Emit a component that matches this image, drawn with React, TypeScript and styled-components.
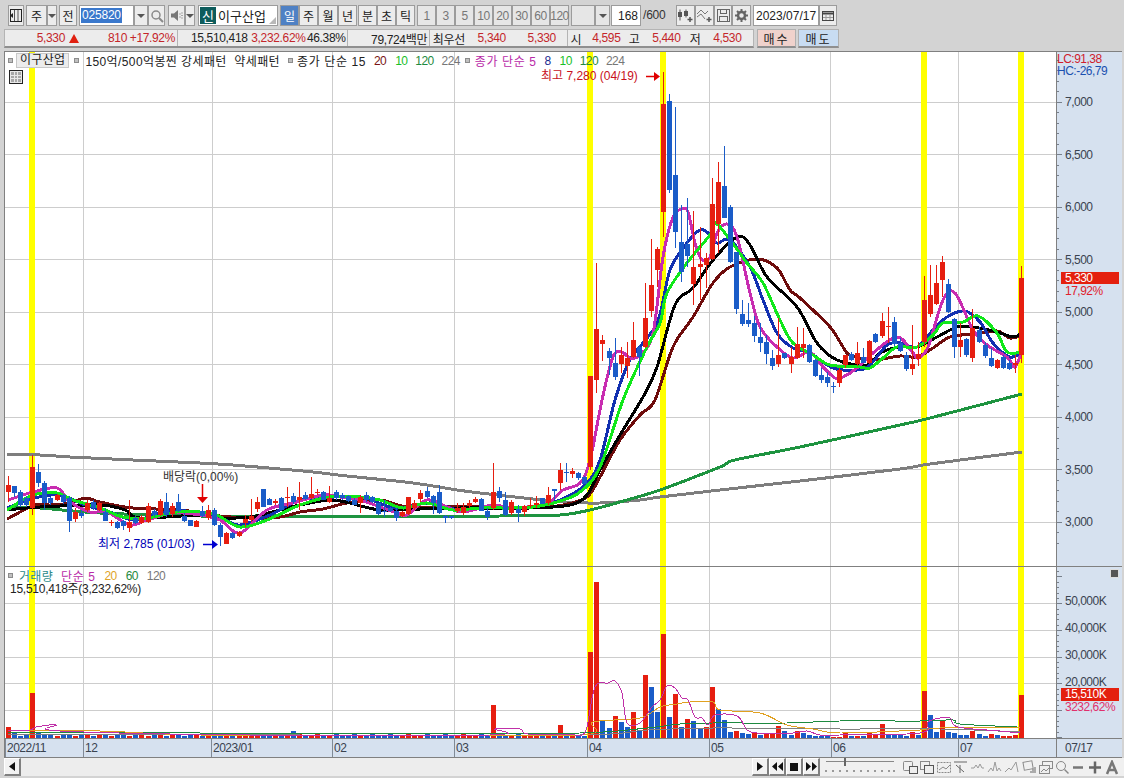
import React, { ReactElement, ReactNode } from 'react';
import styled, { createGlobalStyle } from 'styled-components';

type Candle = ['r' | 'b', number, number, number, number];

// body top, body bottom, high, low - all in page pixels
const candles: Candle[] = [
  ['r',485,492,476,502],['b',486,493,486,497],['b',492,505,490,507],['b',498,505,496,507],['r',467,508,455,515],
  ['b',472,483,464,487],['b',483,503,481,510],['b',498,503,497,505],['r',495,500,494,501],['b',495,502,494,504],
  ['b',498,521,496,532],['r',512,519,508,522],['b',513,516,510,518],['r',503,510,500,512],['b',502,508,500,510],
  ['r',503,510,502,511],['b',512,521,508,521],['r',522,523,520,526],['b',522,528,521,529],['b',521,526,520,530],
  ['r',522,528,500,532],['b',518,523,516,524],['r',517,523,515,524],['r',506,522,503,523],['b',511,515,509,517],
  ['r',501,515,499,516],['b',502,515,493,517],['r',506,514,503,517],['b',502,511,494,512],['b',516,521,513,522],
  ['b',520,526,520,526],['r',521,527,520,527],['b',511,516,506,517],['r',510,518,505,520],['b',510,525,508,526],
  ['b',525,537,523,546],['r',533,544,532,544],['b',533,538,532,539],['r',532,536,531,537],['r',519,523,515,527],
  ['r',516,520,499,522],['r',502,509,497,512],['b',489,507,489,507],['b',499,505,498,505],['r',501,503,499,505],
  ['b',498,510,497,510],['r',497,498,487,507],['b',496,502,493,504],['r',497,500,482,510],['b',495,499,492,500],
  ['r',494,498,477,499],['r',492,493,489,495],['b',492,500,491,500],['r',498,502,486,503],['b',492,498,490,500],
  ['b',495,498,493,500],['b',496,501,495,502],['b',500,505,498,505],['r',497,503,495,513],['b',495,500,492,502],
  ['b',497,502,496,503],['b',503,514,503,515],['b',511,512,500,517],['b',508,511,507,512],['b',511,518,508,521],
  ['r',512,516,511,517],['r',497,514,497,515],['r',503,508,500,510],['r',493,499,490,502],['b',491,497,487,498],
  ['b',496,503,495,514],['b',492,513,485,514],['b',516,518,515,523],['b',516,518,516,519],['r',508,511,503,513],
  ['r',507,513,503,515],['r',503,506,500,508],['r',499,502,497,503],['b',499,511,498,511],['b',511,517,508,520],
  ['r',492,508,463,510],['b',491,498,487,502],['b',500,515,492,516],['r',502,513,500,515],['b',509,513,505,522],
  ['r',506,512,505,516],['r',505,506,498,508],['r',503,505,496,508],['b',498,504,498,504],['r',495,503,487,505],
  ['b',489,491,489,500],['r',470,483,463,490],['b',472,473,463,482],['r',471,474,468,478],['b',473,478,472,480],
  ['b',477,484,476,484],['r',376,467,376,470],['r',329,380,263,393],['r',340,344,335,361],['b',351,358,348,375],
  ['b',363,377,338,380],['r',355,364,347,373],['r',358,366,342,378],['r',340,357,322,358],['b',347,357,345,376],
  ['r',318,347,283,348],['r',285,311,239,317],['r',249,270,247,287],['r',104,212,72,237],['b',101,190,94,193],
  ['b',175,232,107,248],['b',242,272,205,282],['b',244,256,198,267],['r',267,284,211,305],['r',264,267,227,300],
  ['r',258,265,253,288],['r',204,259,178,260],['r',182,224,162,253],['b',186,218,146,218],['b',207,262,205,263],
  ['b',252,309,252,314],['b',314,324,300,326],['b',320,324,303,327],['b',323,336,316,342],['b',337,343,323,352],
  ['b',342,354,335,364],['b',358,366,350,370],['r',355,364,318,367],['b',353,358,353,359],['r',357,364,347,373],
  ['r',344,358,327,359],['r',344,348,328,358],['b',345,362,344,363],['b',360,376,359,377],['b',375,380,368,383],
  ['b',377,383,372,387],['b',386,387,382,393],['r',370,383,368,387],['r',355,365,355,368],['b',354,360,352,361],
  ['r',353,364,342,366],['b',357,363,348,363],['r',341,363,340,364],['b',334,342,333,343],['r',321,336,313,338],
  ['r',326,327,307,343],['b',322,344,317,346],['b',343,351,338,352],['b',355,369,352,371],['r',364,369,325,375],
  ['r',354,359,342,366],['r',300,342,276,347],['r',295,314,265,317],['r',283,304,265,305],['r',262,280,256,297],
  ['b',284,312,279,313],['b',319,347,318,358],['r',340,347,323,357],['b',339,355,338,357],['r',328,358,309,362],
  ['b',330,342,327,343],['b',345,356,342,358],['b',358,366,348,367],['r',360,368,359,369],['b',357,368,355,369],
  ['b',363,369,360,370],['r',363,365,355,373],['r',278,355,266,363],
];

// volume bar tops for the first 96 days that stand out, the rest sit about 2px over the base
const volLeft: Record<number, number> = { 0: 727, 1: 732, 4: 693, 5: 733, 46: 733, 47: 731, 48: 733, 80: 705, 91: 725, 92: 733 };
// from day 96: positive = red, negative = blue
const volRight = [
  652,582,-720,-728,716,-722,-727,712,-731,675,-687,-712,634,-717,694,-727,719,-721,-729,727,687,-709,-720,-732,731,
  -733,-734,733,-735,734,733,726,-731,-735,731,-733,-735,-736,-736,-735,737,737,732,-736,736,-736,733,734,724,-734,
  -735,-735,-736,732,-735,691,-715,-732,721,-732,-733,-735,-735,731,-734,-736,734,-735,736,736,735,695,
];

const candleX = (i: number): number => 8 + i * 6.066;
const priceY = (p: number): number => 102 + (7000 - p) * 0.105;
const prices = [7000, 6500, 6000, 5500, 5000, 4500, 4000, 3500, 3000];
const gridX = [83, 212, 332, 454, 587, 709, 830, 958];
const yellowX = [29, 587, 660, 921, 1018];

type Pt = [number, number];

// catmull-rom through the points, good enough for moving averages
const smooth = (pts: Pt[]): string => {
  let d = `M${pts[0][0]} ${pts[0][1]}`;
  for (let i = 0; i < pts.length - 1; i++) {
    const p0 = pts[i - 1] || pts[i];
    const p1 = pts[i];
    const p2 = pts[i + 1];
    const p3 = pts[i + 2] || p2;
    d += `C${(p1[0] + (p2[0] - p0[0]) / 6).toFixed(1)} ${(p1[1] + (p2[1] - p0[1]) / 6).toFixed(1)} ${(p2[0] - (p3[0] - p1[0]) / 6).toFixed(1)} ${(p2[1] - (p3[1] - p1[1]) / 6).toFixed(1)} ${p2[0]} ${p2[1]}`;
  }
  return d;
};

const gray224: Pt[] = [[7,455],[40,455],[70,457],[133,460],[200,463],[233,465],[280,469],[313,472],[347,476],[413,483],[457,490],[497,495],[533,499],[563,502],[600,503],[640,500],[660,497],[720,490],[800,481],[900,469],[930,464],[1022,452]];
const green120: Pt[] = [[7,507],[40,508],[100,513],[200,516],[280,516],[400,517],[500,516],[560,515],[590,510],[620,502],[660,490],[720,467],[735,460],[800,447],[900,425],[930,418],[1022,394]];
const maroon: Pt[] = [[7,519],[35,505],[50,505],[70,503],[85,498],[100,502],[133,508],[180,510],[220,516],[250,518],[280,517],[300,512],[323,509],[347,503],[380,500],[407,507],[447,507],[480,507],[530,508],[563,505],[587,497],[600,477],[620,440],[640,415],[655,400],[673,347],[693,317],[713,283],[730,267],[757,259],[777,268],[790,290],[800,298],[830,327],[843,347],[850,355],[873,360],[900,356],[917,357],[933,348],[950,337],[973,334],[997,331],[1010,338],[1022,335]];
const black: Pt[] = [[7,510],[40,507],[100,505],[125,510],[140,518],[200,515],[220,518],[250,517],[280,510],[300,505],[330,500],[350,503],[380,510],[420,509],[460,508],[530,508],[570,505],[587,495],[600,470],[620,435],[643,397],[657,367],[675,305],[693,288],[713,260],[737,237],[750,245],[767,277],[797,307],[817,343],[837,360],[867,365],[880,353],[900,347],[917,347],[937,337],[957,327],[973,327],[997,332],[1013,337],[1022,333]];
const navy: Pt[] = [[7,508],[35,498],[60,495],[85,505],[110,512],[135,520],[165,512],[200,512],[225,520],[240,525],[270,515],[300,500],[335,497],[365,498],[395,508],[430,503],[460,510],[490,507],[530,507],[560,500],[585,485],[600,460],[615,400],[630,360],[657,323],[670,270],[687,243],[700,230],[708,233],[717,243],[730,240],[750,267],[763,300],[777,333],[793,348],[810,353],[833,368],[857,370],[870,365],[887,345],[900,343],[917,347],[933,330],[947,317],[965,311],[980,322],[993,343],[1010,357],[1022,352]];
const magenta: Pt[] = [[8,500],[33,492],[57,488],[70,502],[90,512],[107,512],[130,525],[147,520],[173,513],[200,515],[220,520],[240,533],[267,510],[293,503],[323,495],[340,497],[360,500],[397,513],[407,515],[427,500],[447,507],[463,512],[493,505],[513,508],[547,503],[563,490],[580,483],[590,460],[602,400],[613,357],[622,352],[630,358],[640,355],[653,333],[663,257],[673,217],[682,209],[688,212],[695,243],[702,260],[710,257],[717,233],[727,224],[737,237],[750,293],[760,327],[777,347],[793,358],[810,352],[823,367],[835,378],[843,377],[857,368],[873,353],[897,337],[913,353],[918,358],[928,347],[943,300],[955,293],[973,330],[987,345],[1007,357],[1015,367],[1022,350]];
const lime: Pt[] = [[7,510],[33,495],[57,493],[73,500],[100,508],[123,517],[147,518],[177,512],[200,512],[217,515],[240,527],[267,520],[300,505],[330,497],[360,497],[380,500],[403,508],[427,503],[453,510],[480,508],[513,508],[533,507],[557,502],[580,492],[600,467],[623,400],[647,347],[660,323],[667,293],[687,263],[710,235],[717,224],[747,263],[763,283],[780,320],[793,343],[813,355],[830,365],[860,367],[870,368],[883,358],[897,347],[917,347],[933,335],[943,323],[963,322],[978,316],[997,333],[1007,352],[1022,352]];

const volMagenta: Pt[] = [[8,731],[30,730],[36,727],[56,725],[60,731],[250,735],[490,735],[495,729],[520,729],[528,734],[575,735],[582,735],[587,727],[595,687],[608,683],[615,681],[622,693],[627,723],[640,723],[652,707],[660,700],[667,686],[675,688],[682,698],[688,700],[695,717],[702,718],[708,725],[715,715],[737,716],[747,730],[757,733],[780,733],[793,733],[807,731],[820,735],[840,735],[920,733],[928,722],[940,718],[950,718],[958,727],[1000,731],[1020,733]];
const volOrange: Pt[] = [[8,730],[100,731],[200,735],[400,735],[582,735],[593,722],[640,718],[660,707],[677,704],[690,702],[713,702],[720,710],[760,713],[787,725],[813,729],[840,733],[920,730],[940,728],[1020,728]];
const volGreen: Pt[] = [[8,733],[200,733],[400,734],[580,733],[647,728],[680,724],[713,723],[787,723],[840,721],[920,721],[953,720],[960,724],[1017,727]];
const volGray: Pt[] = [[8,734],[300,735],[580,735],[647,730],[713,728],[840,729],[940,729],[1020,732]];

const GlobalStyle = createGlobalStyle`
  html, body { margin: 0; padding: 0; background: #d3d3d3; }
  body { font-family: "Liberation Sans", "Noto Sans CJK KR", sans-serif; font-size: 12px; color: #222; }
`;

const Page = styled.div`
  width: 1124px;
  height: 778px;
  overflow: hidden;
  display: flex;
  flex-direction: column;
  background: #d3d3d3;
`;

const Toolbar = styled.div`
  display: flex;
  align-items: stretch;
  height: 21px;
  margin-top: 5px;
  padding-left: 8px;
`;

const Group = styled.div<{ $ml?: number }>`
  display: flex;
  margin-left: ${(p) => p.$ml ?? 0}px;
`;

const Btn = styled.div<{ $w: number; $on?: boolean; $dim?: boolean }>`
  box-sizing: border-box;
  width: ${(p) => p.$w}px;
  display: flex;
  align-items: center;
  justify-content: center;
  border: 1px solid #9c9c9c;
  background: ${(p) => (p.$on ? '#4f81c4' : p.$dim ? '#e6e6e6' : '#ececec')};
  color: ${(p) => (p.$on ? '#fff' : p.$dim ? '#777' : '#222')};
  font-size: 12px;
  letter-spacing: ${(p) => (p.$dim ? '-0.5px' : '0')};
`;

const Field = styled.div<{ $w: number; $end?: boolean; $small?: boolean }>`
  box-sizing: border-box;
  width: ${(p) => p.$w}px;
  display: flex;
  align-items: center;
  justify-content: ${(p) => (p.$end ? 'flex-end' : 'flex-start')};
  border: 1px solid #9c9c9c;
  background: #fff;
  padding: 0 ${(p) => (p.$small ? 2 : 1)}px;
  font-size: ${(p) => (p.$small ? 12 : 13)}px;
  white-space: nowrap;
`;

const CodeSel = styled.span`
  background: #3a78cc;
  color: #fff;
  padding: 0 1px;
  font-size: 12px;
  letter-spacing: -0.2px;
  line-height: 15px;
`;

const NameBadge = styled.span`
  display: flex;
  align-items: center;
  justify-content: center;
  width: 16px;
  height: 17px;
  background: #0e5c5c;
  color: #fff;
  margin-right: 2px;
`;

const Corner = styled.span`
  width: 0;
  height: 0;
  margin-left: auto;
  margin-top: 9px;
  border-left: 7px solid transparent;
  border-bottom: 7px solid #b8b8b8;
`;

const Caret = styled.span`
  width: 0;
  height: 0;
  border-left: 4px solid transparent;
  border-right: 4px solid transparent;
  border-top: 4px solid #555;
`;

const Total = styled.span`
  width: 26px;
  margin-left: 2px;
  line-height: 21px;
  color: #333;
  letter-spacing: -0.2px;
`;

const QuoteRow = styled.div`
  display: flex;
  margin: 3px 0 0 4px;
  height: 19px;
`;

const QuoteBox = styled.div`
  display: flex;
  box-sizing: border-box;
  width: 750px;
  border: 1px solid #b4b4b4;
  border-bottom: 2px solid #8f8f8f;
  background: #ececec;
`;

const QuoteCell = styled.div<{ $w: number; $last?: boolean }>`
  box-sizing: border-box;
  width: ${(p) => p.$w}px;
  display: flex;
  align-items: center;
  border-right: ${(p) => (p.$last ? 'none' : '1px solid #b4b4b4')};
`;

const QuoteText = styled.span<{ $w: number; $red?: boolean; $left?: number }>`
  width: ${(p) => p.$w}px;
  flex: none;
  box-sizing: border-box;
  text-align: ${(p) => (p.$left !== undefined ? 'left' : 'right')};
  padding-left: ${(p) => p.$left ?? 0}px;
  color: ${(p) => (p.$red ? '#c4262a' : '#222')};
  letter-spacing: -0.35px;
  white-space: nowrap;
`;

const UpMark = styled.span`
  width: 0;
  height: 0;
  margin-left: 4px;
  border-left: 5px solid transparent;
  border-right: 5px solid transparent;
  border-bottom: 9px solid #e02010;
`;

const TradeBtn = styled.div<{ $sell?: boolean; $ml: number }>`
  box-sizing: border-box;
  width: ${(p) => (p.$sell ? 41 : 39)}px;
  margin-left: ${(p) => p.$ml}px;
  display: flex;
  align-items: center;
  justify-content: center;
  letter-spacing: 2px;
  border: 1px solid #b0b0b0;
  border-bottom: 2px solid #8f8f8f;
  background: ${(p) => (p.$sell ? '#c8dcf2' : '#f0d2cc')};
`;

const Frame = styled.div`
  box-sizing: border-box;
  width: 1118px;
  margin: 3px 0 0 4px;
  border-top: 1px solid #808080;
  border-left: 1px solid #808080;
  display: flex;
  flex-direction: column;
`;

const ChartRow = styled.div<{ $h: number }>`
  display: flex;
  height: ${(p) => p.$h}px;
  flex: none;
  box-sizing: content-box;
  border-bottom: 1px solid #808080;
`;

const Plot = styled.div`
  position: relative;
  width: 1051px;
  background: #fff;
`;

const AxisCol = styled.div`
  width: 65px;
  flex: none;
  border-left: 1px solid #808080;
  background: #d6e1ef;
`;

const DateStrip = styled.div`
  display: flex;
  height: 18px;
  flex: none;
  background: #d6e1ef;
  border-bottom: 1px solid #808080;
`;

const DateMain = styled.div`
  width: 1051px;
`;

const Drawing = styled.svg`
  display: block;
`;

const MaLine = styled.path<{ $c: string; $thin?: boolean }>`
  fill: none;
  stroke: ${(p) => p.$c};
  stroke-width: ${(p) => (p.$thin ? 1 : 3)}px;
  shape-rendering: crispEdges;
`;

const AxisText = styled.text<{ $fill?: string }>`
  font-size: 12px;
  fill: ${(p) => p.$fill ?? '#3a4350'};
  letter-spacing: -0.5px;
`;

const NoteText = styled.text<{ $fill: string }>`
  font-size: 12px;
  fill: ${(p) => p.$fill};
`;

const Legend = styled.div`
  position: absolute;
  left: 3px;
  top: 1px;
  display: flex;
  align-items: center;
  height: 15px;
  white-space: nowrap;
`;

const Bullet = styled.span<{ $ml?: number }>`
  width: 3px;
  height: 3px;
  flex: none;
  margin-left: ${(p) => p.$ml ?? 0}px;
  background: #c0c0c0;
  border: 1px solid #8c8c8c;
`;

const NameTag = styled.span`
  margin: 0 5px 0 3px;
  padding: 0 3px;
  background: #ececec;
  border: 1px solid #c8c8c8;
  line-height: 13px;
  letter-spacing: 0.3px;
`;

const LegendText = styled.span<{ $c?: string; $ml?: number; $ls?: number }>`
  color: ${(p) => p.$c ?? '#222'};
  margin-left: ${(p) => p.$ml ?? 0}px;
  letter-spacing: ${(p) => p.$ls ?? -0.6}px;
`;

const GridIcon = styled.div`
  position: absolute;
  left: 4px;
  top: 18px;
  width: 14px;
  height: 14px;
  box-sizing: border-box;
  border: 1px solid #222;
  background: #e8e8e8;
  display: grid;
  grid-template-columns: repeat(3, 1fr);
  padding: 1px;
  gap: 1px;
`;

const GridCell = styled.span`
  background: #a8a8a8;
`;

const VolLegend = styled.div`
  position: absolute;
  left: 3px;
  top: 1px;
`;

const VolLine = styled.div`
  display: flex;
  align-items: center;
  height: 15px;
  white-space: nowrap;
`;

const VolCount = styled.div`
  margin-left: 2px;
  line-height: 12px;
  letter-spacing: -0.25px;
  color: #222;
`;

const CloseBox = styled.div`
  position: absolute;
  right: -63px;
  top: 2px;
  width: 7px;
  height: 7px;
  background: #555;
  border: 1px solid #ddd;
`;

const BottomBar = styled.div`
  display: flex;
  align-items: stretch;
  height: 18px;
  margin-left: 4px;
  background: #f0f0f0;
`;

const Track = styled.div`
  width: 731px;
  background-color: #ededed;
  background-image: radial-gradient(#fafafa 0.5px, transparent 0.6px);
  background-size: 2px 2px;
`;

const NavBtn = styled.div`
  box-sizing: border-box;
  width: 17px;
  display: flex;
  align-items: center;
  justify-content: center;
  background: #f2f2f2;
  border: 1px solid #fff;
  border-right: 2px solid #808080;
  border-bottom: 2px solid #808080;
`;

const Slider = styled.svg`
  margin-left: 4px;
`;

const IconRow = styled.div`
  display: flex;
  align-items: center;
  margin-left: 4px;
`;

const TinyIcon = ({ w = 17, h = 15, children }: { w?: number; h?: number; children: ReactNode }): ReactElement => (
  <svg width={w} height={h} viewBox={`0 0 ${w} ${h}`} fill="none" stroke="#8a8a8a" strokeWidth="1">{children}</svg>
);

const Price = (): ReactElement => (
  <Drawing width={1051} height={514} viewBox="5 52 1051 514">
    {prices.map((p) => <line key={p} x1={5} x2={1056} y1={priceY(p)} y2={priceY(p)} stroke="#cdcdcd" shapeRendering="crispEdges" />)}
    {gridX.map((x) => <line key={x} x1={x} x2={x} y1={52} y2={566} stroke="#cdcdcd" shapeRendering="crispEdges" />)}
    {yellowX.map((x) => <rect key={x} x={x} y={52} width={6} height={514} fill="#ffff00" />)}
    <MaLine d={smooth(gray224)} $c="#7e7e7e" />
    <MaLine d={smooth(green120)} $c="#1e9440" />
    <MaLine d={smooth(maroon)} $c="#6e0c0c" />
    <MaLine d={smooth(black)} $c="#000" />
    <MaLine d={smooth(navy)} $c="#1230b0" />
    <MaLine d={smooth(magenta)} $c="#c82cb0" />
    <MaLine d={smooth(lime)} $c="#10e81a" />
    {candles.map(([c, top, bot, hi, lo], i) => {
      const x = Math.round(candleX(i));
      const fill = c === 'r' ? '#e61e10' : '#1a5cc8';
      return (
        <g key={i} shapeRendering="crispEdges" fill={fill}>
          <rect x={x} y={hi} width={1} height={lo - hi} />
          <rect x={x - 2} y={top} width={5} height={Math.max(bot - top, 1)} />
        </g>
      );
    })}
    <NoteText $fill="#c8101c" x={541} y={80}>최고 7,280 (04/19)</NoteText>
    <path d="M646 76.500H655" stroke="#e00000" strokeWidth={1.5} />
    <path d="M654 72l6 4.500-6 4.500z" fill="#e00000" />
    <NoteText $fill="#333" x={163} y={481}>배당락(0,00%)</NoteText>
    <path d="M202.500 484V498" stroke="#e00000" strokeWidth={1.5} />
    <path d="M197 497h11l-5.500 6z" fill="#e00000" />
    <NoteText $fill="#0000b8" x={98} y={548}>최저 2,785 (01/03)</NoteText>
    <path d="M203 544.500H213" stroke="#0000d0" strokeWidth={1.5} />
    <path d="M212 540l6 4.500-6 4.500z" fill="#0000d0" />
  </Drawing>
);

const PriceAxis = (): ReactElement => {
  const ticks: number[] = [];
  for (let p = 2800; p <= 7400; p += 100) ticks.push(p);
  return (
    <Drawing width={65} height={514} viewBox="1057 52 65 514">
      {ticks.map((p) => (
        <line key={p} x1={1057} x2={p % 500 === 0 ? 1062 : 1059} y1={priceY(p)} y2={priceY(p)} stroke="#77808c" shapeRendering="crispEdges" />
      ))}
      {prices.map((p) => (
        <AxisText key={p} x={1065} y={priceY(p) + 4}>{p.toLocaleString('en-US')}</AxisText>
      ))}
      <AxisText $fill="#d01c2c" x={1057} y={63}>LC:91,38</AxisText>
      <AxisText $fill="#1a50b0" x={1057} y={75}>HC:-26,79</AxisText>
      <rect x={1061} y={272} width={58} height={12} fill="#e4200e" />
      <AxisText $fill="#fff" x={1065} y={282}>5,330</AxisText>
      <AxisText $fill="#e0202c" x={1065} y={295}>17,92%</AxisText>
    </Drawing>
  );
};

const Volume = (): ReactElement => (
  <Drawing width={1051} height={171} viewBox="5 567 1051 171">
    {[603, 630, 657, 683, 710].map((y) => <line key={y} x1={5} x2={1056} y1={y} y2={y} stroke="#cdcdcd" shapeRendering="crispEdges" />)}
    {gridX.map((x) => <line key={x} x1={x} x2={x} y1={567} y2={738} stroke="#cdcdcd" shapeRendering="crispEdges" />)}
    {yellowX.map((x) => <rect key={x} x={x} y={567} width={6} height={171} fill="#ffff00" />)}
    {candles.map(([c], i) => {
      const x = Math.round(candleX(i));
      const raw = i >= 96 ? volRight[i - 96] : volLeft[i] ?? (734 + (i % 3));
      const top = Math.abs(raw);
      const red = i >= 96 ? raw > 0 : c === 'r';
      return <rect key={i} x={x - 2} y={top} width={5} height={738 - top} fill={red ? '#e61e10' : '#1a5cc8'} shapeRendering="crispEdges" />;
    })}
    <MaLine d={smooth(volGray)} $c="#808080" $thin />
    <MaLine d={smooth(volGreen)} $c="#1e8a40" $thin />
    <MaLine d={smooth(volOrange)} $c="#e0a020" $thin />
    <MaLine d={smooth(volMagenta)} $c="#c030a8" $thin />
  </Drawing>
);

const VolumeAxis = (): ReactElement => {
  const ticks: number[] = [];
  for (let y = 737; y > 570; y -= 5.35) ticks.push(Math.round(y));
  return (
    <Drawing width={65} height={171} viewBox="1057 567 65 171">
      {ticks.map((y, i) => (
        <line key={y} x1={1057} x2={i % 5 === 0 ? 1062 : 1059} y1={y} y2={y} stroke="#77808c" shapeRendering="crispEdges" />
      ))}
      {[['50,000K', 605], ['40,000K', 632], ['30,000K', 659], ['20,000K', 686]].map(([t, y]) => (
        <AxisText key={t} x={1065} y={y}>{t}</AxisText>
      ))}
      <rect x={1061} y={688} width={58} height={13} fill="#e4200e" />
      <AxisText $fill="#fff" x={1065} y={698}>15,510K</AxisText>
      <AxisText $fill="#e0306c" x={1065} y={711}>3232,62%</AxisText>
    </Drawing>
  );
};

const dateLabels: [string, number][] = [['2022/11', 7], ['12', 85], ['2023/01', 213], ['02', 334], ['03', 456], ['04', 589], ['05', 711], ['06', 833], ['07', 960]];

const Dates = (): ReactElement => (
  <Drawing width={1051} height={18} viewBox="5 739 1051 18">
    {dateLabels.map(([t, x]) => (
      <g key={t}>
        <line x1={x - 2} x2={x - 2} y1={739} y2={757} stroke="#808a96" shapeRendering="crispEdges" />
        <AxisText x={x} y={752}>{t}</AxisText>
      </g>
    ))}
  </Drawing>
);

const codeIcons = {
  panel: (
    <TinyIcon w={14} h={15}>
      <rect x="1.500" y="1.500" width="11" height="12" stroke="#222" />
      <path d="M5.500 2v11M9 2v11" stroke="#555" />
      <path d="M1 7.500l3-2.500v5z" fill="#222" stroke="none" />
    </TinyIcon>
  ),
  search: (
    <TinyIcon w={14} h={14}>
      <circle cx="6" cy="6" r="4" stroke="#8a8a8a" strokeWidth="1.500" />
      <path d="M9 9l4 4" stroke="#8a8a8a" strokeWidth="2" />
    </TinyIcon>
  ),
  speaker: (
    <TinyIcon w={14} h={13}>
      <path d="M1 4.500h3l4-3.500v11l-4-3.500H1z" fill="#777" stroke="none" />
      <path d="M10 4.500v1M10 7.500v1M12 3.500v1M12 6v1M12 8.500v1" stroke="#666" />
    </TinyIcon>
  ),
  candles: (
    <TinyIcon w={17} h={15}>
      <path d="M3 1.500v11M9 1.500v8" stroke="#555" />
      <rect x="1" y="4" width="4" height="5" fill="#555" stroke="none" />
      <rect x="7" y="3" width="4" height="5" fill="#555" stroke="none" />
      <path d="M13 9v5M10.500 11.500h5" stroke="#555" strokeWidth="1.500" />
    </TinyIcon>
  ),
  lines: (
    <TinyIcon w={17} h={15}>
      <path d="M1 6l4-4 4 4 3-3M1 9l4-3 4 5" stroke="#777" />
      <path d="M13 9v5M10.500 11.500h5" stroke="#555" strokeWidth="1.500" />
    </TinyIcon>
  ),
  save: (
    <TinyIcon w={15} h={15}>
      <rect x="1.500" y="1.500" width="12" height="12" stroke="#666" />
      <rect x="4.500" y="1.500" width="6" height="4" stroke="#666" />
      <rect x="3.500" y="8.500" width="8" height="5" stroke="#666" />
    </TinyIcon>
  ),
  gear: (
    <TinyIcon w={15} h={15}>
      <circle cx="7.500" cy="7.500" r="3.500" stroke="#666" strokeWidth="2.500" />
      <path d="M7.500 1v3M7.500 11v3M1 7.500h3M11 7.500h3M3 3l2 2M10 10l2 2M3 12l2-2M10 5l2-2" stroke="#666" strokeWidth="2" />
    </TinyIcon>
  ),
  calendar: (
    <TinyIcon w={14} h={13}>
      <rect x="1.500" y="2.500" width="11" height="9" stroke="#444" />
      <path d="M1.500 4.500h11" stroke="#444" strokeWidth="2" />
      <path d="M5 6v5M9 6v5M2 8.500h10" stroke="#999" />
    </TinyIcon>
  ),
};

const pulseIcon = (d: string, key: string): ReactElement => (
  <TinyIcon key={key}>
    <path d={d} stroke="#9a9a9a" />
  </TinyIcon>
);

export default function App(): ReactElement {
  return (
    <>
      <GlobalStyle />
      <Page>
        <Toolbar>
          <Btn $w={16}>{codeIcons.panel}</Btn>
          <Group $ml={2}>
            <Btn $w={21}>주</Btn>
            <Btn $w={10}><Caret /></Btn>
          </Group>
          <Group $ml={2}>
            <Btn $w={18}>전</Btn>
          </Group>
          <Group $ml={2}>
            <Field $w={55}><CodeSel>025820</CodeSel></Field>
            <Btn $w={14}><Caret /></Btn>
            <Btn $w={17}>{codeIcons.search}</Btn>
          </Group>
          <Group $ml={3}>
            <Btn $w={17}>{codeIcons.speaker}</Btn>
            <Btn $w={10}><Caret /></Btn>
          </Group>
          <Group $ml={3}>
            <Field $w={80}>
              <NameBadge>신</NameBadge>이구산업<Corner />
            </Field>
          </Group>
          <Group $ml={2}>
            <Btn $w={19} $on>일</Btn>
            <Btn $w={19}>주</Btn>
            <Btn $w={20}>월</Btn>
            <Btn $w={19}>년</Btn>
          </Group>
          <Group $ml={1}>
            <Btn $w={19}>분</Btn>
            <Btn $w={19}>초</Btn>
            <Btn $w={19}>틱</Btn>
          </Group>
          <Group $ml={2}>
            {['1', '3', '5', '10', '20', '30', '60', '120'].map((n) => (
              <Btn key={n} $w={19} $dim>{n}</Btn>
            ))}
          </Group>
          <Group $ml={2}>
            <Btn $w={24} $dim />
            <Btn $w={15} $dim><Caret /></Btn>
          </Group>
          <Group $ml={1}>
            <Field $w={30} $end $small>168</Field>
          </Group>
          <Total>/600</Total>
          <Group $ml={7}>
            <Btn $w={19}>{codeIcons.candles}</Btn>
            <Btn $w={19}>{codeIcons.lines}</Btn>
            <Btn $w={18}>{codeIcons.save}</Btn>
            <Btn $w={19}>{codeIcons.gear}</Btn>
          </Group>
          <Group $ml={2}>
            <Field $w={66} $small>2023/07/17</Field>
            <Btn $w={18}>{codeIcons.calendar}</Btn>
          </Group>
        </Toolbar>

        <QuoteRow>
          <QuoteBox>
            <QuoteCell $w={173}>
              <QuoteText $w={60} $red>5,330</QuoteText>
              <UpMark />
              <QuoteText $w={48} $red>810</QuoteText>
              <QuoteText $w={48} $red>+17.92%</QuoteText>
            </QuoteCell>
            <QuoteCell $w={171}>
              <QuoteText $w={70}>15,510,418</QuoteText>
              <QuoteText $w={58} $red>3,232.62%</QuoteText>
              <QuoteText $w={40}>46.38%</QuoteText>
            </QuoteCell>
            <QuoteCell $w={82}>
              <QuoteText $w={79}>79,724백만</QuoteText>
            </QuoteCell>
            <QuoteCell $w={139}>
              <QuoteText $w={38} $left={3}>최우선</QuoteText>
              <QuoteText $w={38} $red>5,340</QuoteText>
              <QuoteText $w={50} $red>5,330</QuoteText>
            </QuoteCell>
            <QuoteCell $w={185} $last>
              <QuoteText $w={12} $left={2}>시</QuoteText>
              <QuoteText $w={40} $red>4,595</QuoteText>
              <QuoteText $w={19}>고</QuoteText>
              <QuoteText $w={41} $red>5,440</QuoteText>
              <QuoteText $w={20}>저</QuoteText>
              <QuoteText $w={41} $red>4,530</QuoteText>
            </QuoteCell>
          </QuoteBox>
          <TradeBtn $ml={3}>매수</TradeBtn>
          <TradeBtn $ml={2} $sell>매도</TradeBtn>
        </QuoteRow>

        <Frame>
          <ChartRow $h={514}>
            <Plot>
              <Price />
              <Legend>
                <Bullet />
                <NameTag>이구산업</NameTag>
                <Bullet />
                <LegendText $ml={6} $ls={0.4}>150억/500억봉찐 강세패턴&nbsp;&nbsp;약세패턴</LegendText>
                <Bullet $ml={8} />
                <LegendText $ml={4} $ls={0.6}>종가 단순 15</LegendText>
                <LegendText $ml={8} $c="#7a1414">20</LegendText>
                <LegendText $ml={9} $c="#18c028">10</LegendText>
                <LegendText $ml={8} $c="#1e8a40">120</LegendText>
                <LegendText $ml={8} $c="#777">224</LegendText>
                <Bullet $ml={5} />
                <LegendText $ml={5} $c="#b82aa8" $ls={0.6}>종가 단순 5</LegendText>
                <LegendText $ml={8} $c="#1c2c90">8</LegendText>
                <LegendText $ml={9} $c="#18c028">10</LegendText>
                <LegendText $ml={8} $c="#1e8a40">120</LegendText>
                <LegendText $ml={8} $c="#777">224</LegendText>
              </Legend>
              <GridIcon>
                {Array.from({ length: 9 }).map((_, i) => <GridCell key={i} />)}
              </GridIcon>
            </Plot>
            <AxisCol><PriceAxis /></AxisCol>
          </ChartRow>
          <ChartRow $h={171}>
            <Plot>
              <Volume />
              <VolLegend>
                <VolLine>
                  <Bullet />
                  <LegendText $ml={6} $c="#2a8a8a" $ls={0.3}>거래량</LegendText>
                  <LegendText $ml={8} $c="#b82aa8" $ls={0.6}>단순 5</LegendText>
                  <LegendText $ml={9} $c="#e0a428">20</LegendText>
                  <LegendText $ml={9} $c="#1e8a40">60</LegendText>
                  <LegendText $ml={9} $c="#777">120</LegendText>
                </VolLine>
                <VolCount>15,510,418주(3,232,62%)</VolCount>
              </VolLegend>
              <CloseBox />
            </Plot>
            <AxisCol><VolumeAxis /></AxisCol>
          </ChartRow>
          <DateStrip>
            <DateMain><Dates /></DateMain>
            <AxisCol>
              <Drawing width={65} height={18} viewBox="1057 739 65 18">
                <AxisText x={1065} y={752}>07/17</AxisText>
              </Drawing>
            </AxisCol>
          </DateStrip>
        </Frame>

        <BottomBar>
          <NavBtn><svg width="6" height="9"><path d="M6 0v9L0 4.500z" fill="#111" /></svg></NavBtn>
          <Track />
          <NavBtn><svg width="6" height="9"><path d="M0 0v9l6-4.500z" fill="#111" /></svg></NavBtn>
          <NavBtn><svg width="11" height="9"><path d="M5 0v9L0 4.500zM11 0v9L6 4.500z" fill="#111" /></svg></NavBtn>
          <NavBtn><svg width="8" height="8"><rect width="8" height="8" fill="#111" /></svg></NavBtn>
          <NavBtn><svg width="11" height="9"><path d="M0 0v9l5-4.500zM6 0v9l5-4.500z" fill="#111" /></svg></NavBtn>
          <Slider width="74" height="16" viewBox="0 0 74 16">
            <path d="M2 3.500h68" stroke="#888" />
            <path d="M21 0v8" stroke="#666" strokeWidth="2" />
            <path d="M2 12v2M9 12v2M16 12v2M23 12v2M30 12v2M37 12v2M44 12v2M51 12v2M58 12v2M65 12v2M70 12v2" stroke="#444" />
          </Slider>
          <IconRow>
            <TinyIcon><rect x="1.500" y="1.500" width="9" height="9" rx="1" /><rect x="7.500" y="6.500" width="8" height="7" fill="#eee" stroke="#555" /></TinyIcon>
            <TinyIcon><rect x="1.500" y="1.500" width="9" height="8" /><rect x="5.500" y="5.500" width="9" height="8" fill="#eee" stroke="#555" /></TinyIcon>
            <TinyIcon><rect x="1.500" y="2.500" width="13" height="10" strokeDasharray="2 1" /><path d="M3 10l4-3 3 2 4-4" /></TinyIcon>
            <TinyIcon><path d="M1 2h13M7 5v8M3 5l8 7" stroke="#666" /></TinyIcon>
            {pulseIcon('M1 8h3l2-3 2 3 2-4 2 4h2', 'p1')}
            {pulseIcon('M1 12l3-4 2 3 2-9 2 9 2-3 2 3', 'p2')}
            {pulseIcon('M1 12l4-4 2 2 5-8 2 10', 'p3')}
            <TinyIcon><rect x="2.500" y="1.500" width="9" height="8" transform="rotate(-10 7 5)" /><path d="M10 13v-2M12 13v-4M14 13v-6" stroke="#666" /></TinyIcon>
            <TinyIcon><rect x="4.500" y="1.500" width="10" height="7" /><rect x="1.500" y="5.500" width="10" height="8" fill="#eee" /><path d="M3 12l3-3 2 2 3-3" /></TinyIcon>
            <TinyIcon w={15}><circle cx="6" cy="6" r="4.500" stroke="#888" /><path d="M9.500 9.500l4 4" stroke="#888" strokeWidth="1.500" /></TinyIcon>
            <TinyIcon><path d="M3 7.500h10" stroke="#777" strokeWidth="2.500" /></TinyIcon>
            <TinyIcon><path d="M2 7.500h12M8 1.500v12" stroke="#666" strokeWidth="2.500" /></TinyIcon>
            <TinyIcon><path d="M3 14L8 2l5 12M5 10h6" stroke="#777" strokeWidth="2.500" /></TinyIcon>
          </IconRow>
        </BottomBar>
      </Page>
    </>
  );
}
